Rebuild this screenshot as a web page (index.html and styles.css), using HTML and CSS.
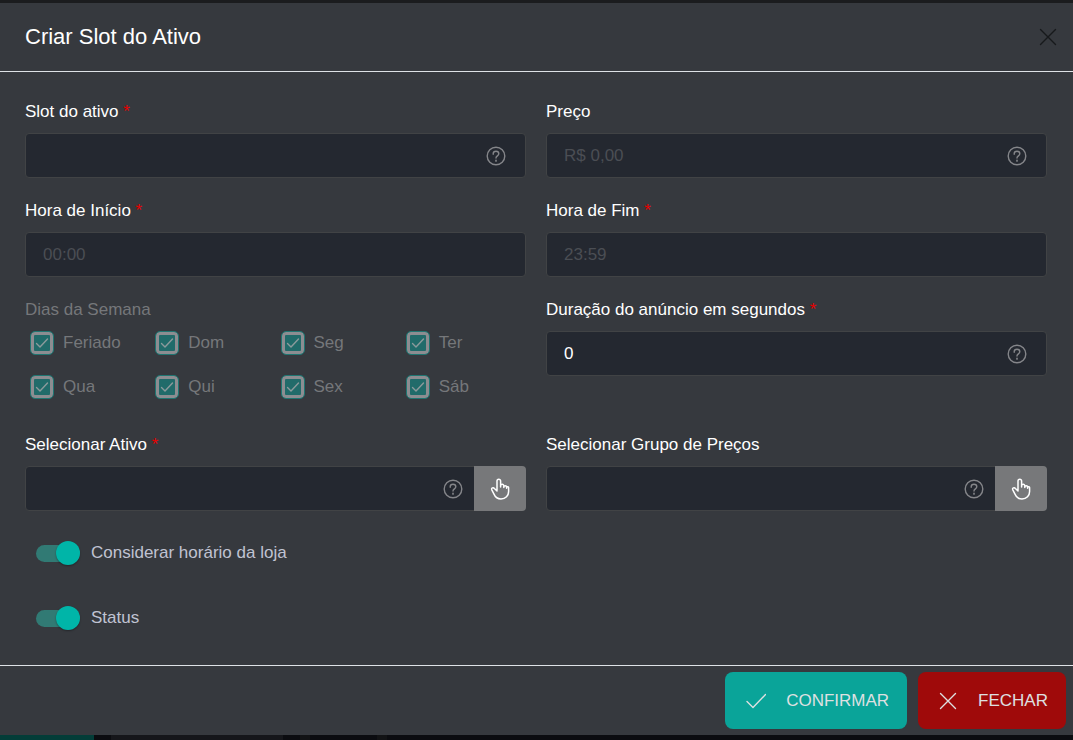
FILE: index.html
```html
<!DOCTYPE html>
<html lang="pt-BR">
<head>
<meta charset="utf-8">
<meta name="viewport" content="width=device-width, initial-scale=1">
<title>Criar Slot do Ativo</title>
<link rel="stylesheet" href="styles.css">
</head>
<body>
<svg class="defs" aria-hidden="true">
  <symbol id="help" viewBox="0 0 20 20"><circle cx="10" cy="10" r="8.800"/><path d="M7.200 8.200V7.800a2.800 2.600 0 0 1 5.600 0c0 1.900-2.800 2.200-2.800 4.200"/><path d="M10 14.400v.5" stroke-width="1.700"/></symbol>
  <symbol id="hand" viewBox="0 0 20 22"><path d="M7 12.500V3a1.800 1.800 0 0 1 3.600 0v6M10.600 9V7.800a1.500 1.500 0 0 1 3.200 0v1.700M13.800 9.200a1.400 1.400 0 0 1 2.800 0v1M16.600 9.200a1.100 1.100 0 0 1 2 .8v3.500c0 4.200-3 7.400-7.600 7.400-4 0-5.800-2-7-4.800l-2.200-4.300c-.9-2 1.500-2.700 2.600-1.300L7 13"/></symbol>
  <symbol id="tick" viewBox="0 0 24 24"><path d="M6.500 12.500l3.500 3.500 7.500-8"/></symbol>
  <symbol id="cross" viewBox="0 0 18 18"><path d="M1.500 1.500l15 15M16.500 1.500l-15 15"/></symbol>
  <symbol id="confirm" viewBox="0 0 20 16"><path d="M1 8.500l6 6L19.500 1.500"/></symbol>
</svg>
<main class="dialog">
  <header class="dialog-header">
    <h1 class="title">Criar Slot do Ativo</h1>
    <button class="close" type="button" aria-label="Fechar janela"><svg class="icon-cross"><use href="#cross"/></svg></button>
  </header>
  <form class="form" id="slot-form">
    <div class="field">
      <label class="label" for="slot">Slot do ativo <span class="required">*</span></label>
      <div class="control"><input class="input" id="slot" type="text"><svg class="help"><use href="#help"/></svg></div>
    </div>
    <div class="field">
      <label class="label" for="price">Preço</label>
      <div class="control"><input class="input" id="price" type="text" placeholder="R$ 0,00"><svg class="help"><use href="#help"/></svg></div>
    </div>
    <div class="field">
      <label class="label" for="start">Hora de Início <span class="required">*</span></label>
      <div class="control"><input class="input" id="start" type="text" placeholder="00:00"></div>
    </div>
    <div class="field">
      <label class="label" for="end">Hora de Fim <span class="required">*</span></label>
      <div class="control"><input class="input" id="end" type="text" placeholder="23:59"></div>
    </div>
    <fieldset class="days" disabled>
      <legend class="label">Dias da Semana</legend>
      <div class="days-grid">
        <label class="day"><span class="check"><input class="box" type="checkbox" checked><svg class="tick"><use href="#tick"/></svg></span>Feriado</label>
        <label class="day"><span class="check"><input class="box" type="checkbox" checked><svg class="tick"><use href="#tick"/></svg></span>Dom</label>
        <label class="day"><span class="check"><input class="box" type="checkbox" checked><svg class="tick"><use href="#tick"/></svg></span>Seg</label>
        <label class="day"><span class="check"><input class="box" type="checkbox" checked><svg class="tick"><use href="#tick"/></svg></span>Ter</label>
        <label class="day"><span class="check"><input class="box" type="checkbox" checked><svg class="tick"><use href="#tick"/></svg></span>Qua</label>
        <label class="day"><span class="check"><input class="box" type="checkbox" checked><svg class="tick"><use href="#tick"/></svg></span>Qui</label>
        <label class="day"><span class="check"><input class="box" type="checkbox" checked><svg class="tick"><use href="#tick"/></svg></span>Sex</label>
        <label class="day"><span class="check"><input class="box" type="checkbox" checked><svg class="tick"><use href="#tick"/></svg></span>Sáb</label>
      </div>
    </fieldset>
    <div class="field">
      <label class="label" for="duration">Duração do anúncio em segundos <span class="required">*</span></label>
      <div class="control"><input class="input" id="duration" type="text" inputmode="numeric" value="0"><svg class="help"><use href="#help"/></svg></div>
    </div>
    <div class="field">
      <label class="label" for="asset">Selecionar Ativo <span class="required">*</span></label>
      <div class="control picker"><input class="input" id="asset" type="text"><svg class="help"><use href="#help"/></svg><button class="pick" type="button" aria-label="Escolher ativo"><svg class="hand"><use href="#hand"/></svg></button></div>
    </div>
    <div class="field">
      <label class="label" for="group">Selecionar Grupo de Preços</label>
      <div class="control picker"><input class="input" id="group" type="text"><svg class="help"><use href="#help"/></svg><button class="pick" type="button" aria-label="Escolher grupo de preços"><svg class="hand"><use href="#hand"/></svg></button></div>
    </div>
    <div class="switches">
      <label class="switch-row"><input class="switch" type="checkbox" role="switch" checked>Considerar horário da loja</label>
      <label class="switch-row"><input class="switch" type="checkbox" role="switch" checked>Status</label>
    </div>
  </form>
  <footer class="dialog-footer">
    <button class="action confirm" type="submit" form="slot-form"><svg class="icon-confirm"><use href="#confirm"/></svg>CONFIRMAR</button>
    <button class="action dismiss" type="button"><svg class="icon-cross"><use href="#cross"/></svg>FECHAR</button>
  </footer>
</main>
<div class="backdrop"><span class="backdrop-tab"></span><span class="backdrop-panel"></span><span class="backdrop-card"></span></div>
</body>
</html>
```

FILE: styles.css
```css
* {
  box-sizing: border-box;
}

body {
  margin: 0;
  min-height: 100vh;
  display: flex;
  flex-direction: column;
  background: #0b0c10;
  border-top: 3px solid #1b1c1e;
  color: #fff;
  font: 17px/22px "Liberation Sans", Arial, sans-serif;
}

button,
input {
  font: inherit;
  color: inherit;
  margin: 0;
}

button {
  border: 0;
  cursor: pointer;
}

svg {
  fill: none;
  stroke: currentColor;
  stroke-width: 1.4;
  stroke-linecap: round;
  stroke-linejoin: round;
}

.defs {
  display: none;
}

.dialog {
  flex: 1;
  display: flex;
  flex-direction: column;
  background: #36393e;
}

.dialog-header {
  display: flex;
  align-items: center;
  justify-content: space-between;
  padding: 20px 16px 21px 25px;
  border-bottom: 1px solid #dee2e6;
}

.title {
  margin: 0;
  font-size: 22px;
  line-height: 27px;
  font-weight: 400;
}

.close {
  display: flex;
  padding: 0;
  background: none;
  color: #17191c;
}

.icon-cross {
  width: 18px;
  height: 18px;
}

.form {
  flex: 1;
  display: grid;
  grid-template-columns: 1fr 1fr;
  align-content: start;
  gap: 22px 20px;
  padding: 29px 26px 34px 25px;
}

.field {
  display: flex;
  flex-direction: column;
  gap: 10px;
}

.label {
  padding: 0;
}

.required {
  color: #e60000;
}

.control {
  display: grid;
  grid-template-columns: 1fr 20px 20px;
  align-items: center;
}

.picker {
  grid-template-columns: 1fr 20px 11px 52px;
}

.input {
  grid-area: 1 / 1 / 2 / -1;
  width: 100%;
  height: 45px;
  padding: 0 50px 0 17px;
  background: #242830;
  border: 1px solid #414345;
  border-radius: 4px;
  outline: none;
}

.input::placeholder {
  color: #4b4e54;
  opacity: 1;
}

.help {
  grid-area: 1 / 2;
  width: 20px;
  height: 20px;
  color: #85868a;
}

.pick {
  grid-area: 1 / 4;
  display: flex;
  align-items: center;
  justify-content: center;
  height: 45px;
  background: #77787a;
  border-radius: 0 4px 4px 0;
}

.hand {
  width: 20px;
  height: 22px;
  stroke-width: 1.5;
}

.days {
  min-width: 0;
  margin: 0;
  padding: 0;
  border: 0;
  color: #75777a;
}

.days-grid {
  display: grid;
  grid-template-columns: repeat(4, 1fr);
  gap: 20px 0;
  padding: 10px 0 13px;
}

.day {
  display: flex;
  align-items: center;
  gap: 9px;
  padding-left: 5px;
}

.check {
  display: grid;
}

.box {
  grid-area: 1 / 1;
  appearance: none;
  width: 24px;
  height: 24px;
  border: 1px solid #1f7672;
  border-radius: 5px;
  background: #216b6a;
  box-shadow: inset 0 0 0 3px #8c8d91;
}

.tick {
  grid-area: 1 / 1;
  width: 24px;
  height: 24px;
  color: #8c9a9c;
}

.switches {
  grid-column: 1 / -1;
  display: flex;
  flex-direction: column;
  gap: 41px;
  padding: 8px 11px 0;
  color: #c0c3d2;
}

.switch-row {
  display: flex;
  align-items: center;
  gap: 11px;
}

.switch {
  appearance: none;
  display: grid;
  align-items: center;
  width: 44px;
  height: 24px;
}

.switch::before,
.switch::after {
  content: "";
  grid-area: 1 / 1;
}

.switch::before {
  height: 17px;
  border-radius: 9px;
  background: #317a74;
}

.switch::after {
  justify-self: end;
  width: 24px;
  height: 24px;
  border-radius: 50%;
  background: #00b5a8;
  box-shadow: 0 1px 2px #0005;
}

.dialog-footer {
  display: flex;
  justify-content: flex-end;
  gap: 11px;
  padding: 6px 7px;
  border-top: 1px solid #dee2e6;
}

.action {
  display: flex;
  align-items: center;
  height: 57px;
  padding: 0 18px 0 21px;
  border-radius: 8px;
  color: #dee0e1;
}

.confirm {
  gap: 20px;
  background: #0aa499;
}

.dismiss {
  gap: 21px;
  background: #9f0a0a;
}

.icon-confirm {
  width: 20px;
  height: 16px;
}

.backdrop {
  display: flex;
  gap: 17px;
  height: 5px;
}

.backdrop-tab {
  width: 94px;
  background: #033d38;
}

.backdrop-panel {
  width: 172px;
  background: #15161a;
}

.backdrop-card {
  width: 87px;
  border: solid #121315;
  border-width: 0 10px;
}
```
